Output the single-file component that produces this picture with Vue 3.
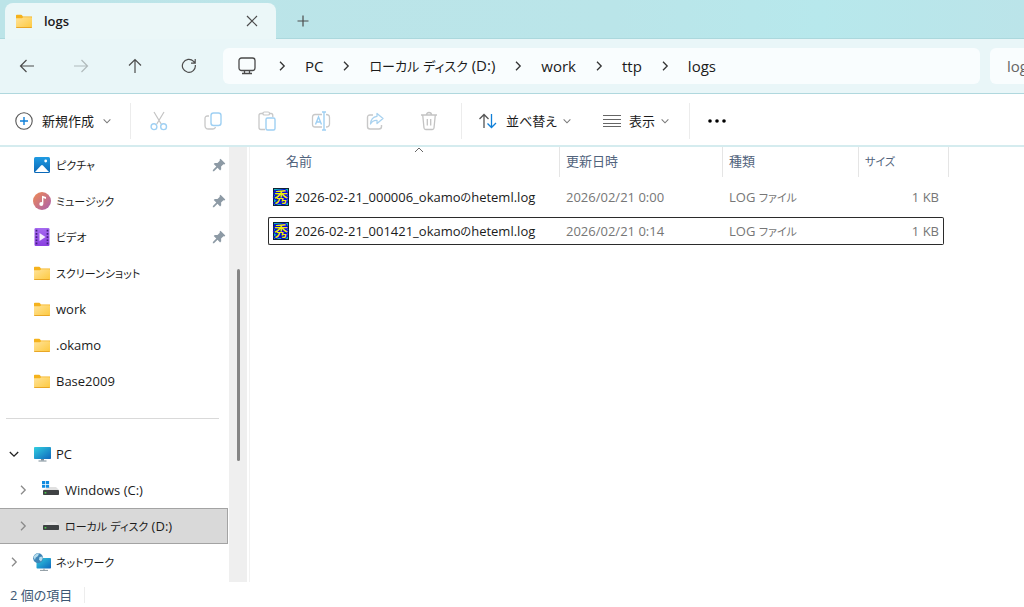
<script setup>
import { h } from 'vue'

const crumbs = ['PC', 'ローカル ディスク (D:)', 'work', 'ttp', 'logs']

const pinned = [
  { name: 'ピクチャ', icon: 'pictures', pin: true },
  { name: 'ミュージック', icon: 'music', pin: true },
  { name: 'ビデオ', icon: 'video', pin: true },
  { name: 'スクリーンショット', icon: 'folder' },
  { name: 'work', icon: 'folder' },
  { name: '.okamo', icon: 'folder' },
  { name: 'Base2009', icon: 'folder' },
]

const tree = [
  { name: 'PC', icon: 'pc', open: true },
  { name: 'Windows (C:)', icon: 'windrive', nested: true },
  { name: 'ローカル ディスク (D:)', icon: 'drive', nested: true, selected: true },
  { name: 'ネットワーク', icon: 'network' },
]

const files = [
  { name: '2026-02-21_000006_okamoのheteml.log', date: '2026/02/21 0:00', type: 'LOG ファイル', size: '1 KB' },
  { name: '2026-02-21_001421_okamoのheteml.log', date: '2026/02/21 0:14', type: 'LOG ファイル', size: '1 KB', focused: true },
]

// Sets kana runs in a smaller size than the Latin text around them.
const Label = (props) =>
  h('span', { class: 'label' }, props.text.split(/([\u3040-\u30ff]+)/).filter(Boolean).map((part) =>
    /[\u3040-\u30ff]/.test(part) ? h('span', { class: 'kana' }, part) : part))
Label.props = ['text']
</script>

<template>
  <div class="window">
    <svg class="defs" width="0" height="0" aria-hidden="true">
      <defs>
        <linearGradient id="gFolder" x1="0" y1="0" x2="1" y2="1"><stop offset="0" stop-color="#ffe39a" /><stop offset="1" stop-color="#fdc93f" /></linearGradient>
        <linearGradient id="gPic" x1="0" y1="0" x2="0" y2="1"><stop offset="0" stop-color="#1f9be2" /><stop offset="1" stop-color="#0a67b6" /></linearGradient>
        <linearGradient id="gMusic" x1="0" y1="0" x2="1" y2="1"><stop offset="0" stop-color="#f08b52" /><stop offset="1" stop-color="#a95fb0" /></linearGradient>
        <linearGradient id="gVideo" x1="0" y1="0" x2="0" y2="1"><stop offset="0" stop-color="#a56af0" /><stop offset="1" stop-color="#8a3fe0" /></linearGradient>
        <linearGradient id="gPc" x1="0" y1="0" x2="1" y2="1"><stop offset="0" stop-color="#32cfe0" /><stop offset="1" stop-color="#0f67bd" /></linearGradient>
      </defs>
      <symbol id="folder" viewBox="0 0 18 18">
        <path d="M1 3.6q0-.8.8-.8h4.4q.5 0 .8.4l.9 1.2h9.1V9H1z" fill="#f5b21c" />
        <path d="M1 6.2h5.6q.4 0 .7-.3l.9-.7h8q.8 0 .8.8v9q0 .8-.8.8H1.8q-.8 0-.8-.8z" fill="url(#gFolder)" />
        <path d="M1.2 15.5h15.6" stroke="#e6a01c" stroke-width=".9" />
      </symbol>
      <symbol id="pictures" viewBox="0 0 18 18">
        <rect x="1" y="1" width="16" height="16" rx="1.5" fill="url(#gPic)" />
        <path d="M2 16l6-6.4q1-1 2 0l6 6.4z" fill="#fff" /><circle cx="12.7" cy="5" r="1.4" fill="#fff" />
      </symbol>
      <symbol id="music" viewBox="0 0 18 18">
        <circle cx="9" cy="9" r="9" fill="url(#gMusic)" />
        <path d="M9 3.7l4 1.3v2l-2.8-.9v5.4" fill="#fff" /><path d="M9.6 4v8" stroke="#fff" stroke-width="1.2" /><circle cx="8.3" cy="12" r="2" fill="#fff" />
      </symbol>
      <symbol id="video" viewBox="0 0 18 18">
        <rect x="1.5" width="15" height="18" rx="1.2" fill="url(#gVideo)" />
        <path d="M3.5 1.8v15M14.5 1.8v15" stroke="#41217c" stroke-width="1.7" stroke-dasharray="1.7 1.5" />
        <path d="M6.5 5l6 4-6 4z" fill="#f4eefc" />
      </symbol>
      <symbol id="pc" viewBox="0 0 18 18">
        <rect x="1" y="2" width="17" height="12" rx=".8" fill="url(#gPc)" /><path d="M8 14h3v1.5H8z" fill="#7b8b96" /><path d="M5.5 16h8" stroke="#7b8b96" stroke-width="1" />
      </symbol>
      <symbol id="drive" viewBox="0 0 18 18">
        <path d="M4 5h10l3 4H1z" fill="#e4e4e4" /><rect x="1" y="8" width="16" height="5" rx=".8" fill="#3f4244" /><rect x="2.6" y="10" width="1.7" height="1.5" fill="#49d14c" />
      </symbol>
      <symbol id="windrive" viewBox="0 0 18 18">
        <path d="M7 6h7l3 3H1z" fill="#e0e0e0" /><rect x="1" y="9" width="16" height="5" rx=".8" fill="#3f4244" /><rect x="2.6" y="11" width="1.7" height="1.5" fill="#49d14c" />
        <path d="M0 0h3.2v3H0zM3.9 0h3.2v3H3.9zM0 3.8h3.2v3H0zM3.9 3.8h3.2v3H3.9z" fill="#108be0" />
      </symbol>
      <symbol id="network" viewBox="0 0 18 18">
        <rect x="3.5" y="5" width="14.5" height="10.5" rx=".8" fill="url(#gPc)" /><path d="M7 17.4h8M11 15.5v2" stroke="#8b979f" />
        <circle cx="5.2" cy="5.2" r="5" fill="#3f86b8" /><path d="M1 3q2-3 5-2.4L5 3 2.6 4.7 2 7Q.3 5.500 1 3zM6.500 4l3.200-.6q.6 3-1.700 5l-2-1.600z" fill="#b4dcec" />
      </symbol>
      <symbol id="pin" viewBox="0 0 14 14">
        <path d="M8.500.8l4.800 4.800-.9.900-1-.2-2.300 2.300.1 2.700-1.100 1.100-2.600-2.600L2 13.200l-1.200.1.100-1.200L4.300 8.600 1.700 6l1.100-1.100 2.700.1 2.300-2.300-.2-1z" fill="#8d9aa5" />
      </symbol>
      <symbol id="right" viewBox="0 0 10 10"><path d="M3 .8L7.200 5 3 9.200" fill="none" stroke="currentColor" stroke-width="1.300" /></symbol>
      <symbol id="down" viewBox="0 0 10 10"><path d="M.8 3L5 7.200 9.200 3" fill="none" stroke="currentColor" stroke-width="1.300" /></symbol>
    </svg>

    <header class="tabbar">
      <div class="tab">
        <svg class="i18"><use href="#folder" /></svg>
        <span class="tab-title">logs</span>
        <button class="icon-btn" aria-label="閉じる"><svg width="12" height="12" viewBox="0 0 12 12" class="line"><path d="M1 1l10 10M11 1L1 11" /></svg></button>
      </div>
      <button class="icon-btn new-tab" aria-label="新しいタブ"><svg width="12" height="12" viewBox="0 0 12 12" class="line"><path d="M6 .5v11M.5 6h11" /></svg></button>
    </header>

    <nav class="navbar">
      <div class="nav-buttons">
        <button class="icon-btn" aria-label="戻る"><svg width="16" height="16" viewBox="0 0 16 16" class="line"><path d="M15 8H1.500M7.500 2L1.500 8l6 6" /></svg></button>
        <button class="icon-btn" aria-label="進む" disabled><svg width="16" height="16" viewBox="0 0 16 16" class="line faded"><path d="M1 8h13.500M8.500 2l6 6-6 6" /></svg></button>
        <button class="icon-btn" aria-label="上へ"><svg width="16" height="16" viewBox="0 0 16 16" class="line"><path d="M8 15V1.500M2 7.500l6-6 6 6" /></svg></button>
        <button class="icon-btn" aria-label="更新"><svg width="16" height="16" viewBox="0 0 16 16" class="line"><path d="M14.300 7a6.500 6.500 0 1 1-1.700-3.600L14 5M14.200 1v4.200H10" /></svg></button>
      </div>
      <div class="address">
        <svg class="monitor" width="18" height="18" viewBox="0 0 18 18" fill="none" stroke="#4a4a4a" stroke-width="1.300"><rect x="1" y="1" width="16" height="12.500" rx="2.500" /><path d="M4 16.500h10M6.500 14v2M11.500 14v2" /></svg>
        <template v-for="c in crumbs" :key="c">
          <svg class="chev"><use href="#right" /></svg>
          <a href="#" class="crumb"><Label :text="c" /></a>
        </template>
      </div>
      <input class="search" type="text" aria-label="検索" placeholder="logs" />
    </nav>

    <div class="toolbar">
      <button class="tool create">
        <svg width="18" height="18" viewBox="0 0 18 18" fill="none"><circle cx="9" cy="9" r="8.200" stroke="#555" stroke-width="1.100" /><path d="M9 5v8M5 9h8" stroke="#0f7fd8" stroke-width="1.400" /></svg>
        <span>新規作成</span><svg class="caret"><use href="#down" /></svg>
      </button>
      <div class="group">
        <button class="icon-btn" aria-label="切り取り" disabled><svg width="18" height="20" viewBox="0 0 18 20" fill="none"><path d="M4 1l7.500 12.500M14 1L6.500 13.500" stroke="#c3c3c3" stroke-width="1.200" /><g stroke="#9fd0f3" stroke-width="1.400"><circle cx="4" cy="15.700" r="2.900" /><circle cx="13.600" cy="15.700" r="2.900" /></g></svg></button>
        <button class="icon-btn" aria-label="コピー" disabled><svg width="18" height="20" viewBox="0 0 18 20" fill="none"><path d="M5 5H3.500Q1 5 1 7.500v7Q1 18 4.500 18H9q2 0 2.500-2" stroke="#c8c8c8" stroke-width="1.300" /><rect x="7" y="2" width="10" height="12.500" rx="2.500" stroke="#9fd0f3" stroke-width="1.400" /></svg></button>
        <button class="icon-btn" aria-label="貼り付け" disabled><svg width="18" height="20" viewBox="0 0 18 20" fill="none"><path d="M5 2.500H3Q1 2.500 1 4.500v12Q1 18.500 3 18.500h4M11 2.500h2q1.800 0 1.800 2V6" stroke="#c8c8c8" stroke-width="1.300" /><rect x="5" y="1" width="6.500" height="3" rx="1.300" stroke="#c8c8c8" stroke-width="1.200" /><rect x="8" y="7" width="9" height="12" rx="1.500" stroke="#9fd0f3" stroke-width="1.400" /></svg></button>
        <button class="icon-btn" aria-label="名前の変更" disabled><svg width="20" height="20" viewBox="0 0 20 20" fill="none"><path d="M11 3.500H4Q1.500 3.500 1.500 6v7.500q0 2.500 2.500 2.500h7M15 3.500q3.500 0 3.500 3v6.500q0 3-3.500 3" stroke="#c8c8c8" stroke-width="1.300" /><path d="M4.500 13.500L7.500 6l3 7.500M5.700 11h3.800M13 1v18M11 1h4M11 19h4" stroke="#9fd0f3" stroke-width="1.400" /></svg></button>
        <button class="icon-btn" aria-label="共有" disabled><svg width="18" height="20" viewBox="0 0 18 20" fill="none"><path d="M7 4H4Q1.500 4 1.500 6.500v9Q1.500 18 4 18h9q2.500 0 2.500-2.500V14" stroke="#c8c8c8" stroke-width="1.400" /><path d="M11 2.500l6 5-6 5V9.500q-4-.5-6.500 3.500.5-7 6.500-7.700z" stroke="#a9d2ef" stroke-width="1.300" stroke-linejoin="round" /></svg></button>
        <button class="icon-btn" aria-label="削除" disabled><svg width="18" height="20" viewBox="0 0 18 20" fill="none" stroke="#c3c3c3" stroke-width="1.300"><path d="M1 4h16M6.500 4Q6.500 1.500 9 1.500T11.500 4M2.700 4l1.300 13q.2 1.500 1.700 1.500h6.600q1.500 0 1.700-1.500l1.300-13M7.300 8v6.500M10.700 8v6.500" /></svg></button>
      </div>
      <div class="views">
        <button class="tool">
          <svg width="20" height="16" viewBox="0 0 20 16" fill="none" stroke-width="1.300"><path d="M6 15V1.500M1.500 6L6 1.500 10.500 6" stroke="#555" /><path d="M13.500 1v13.500M9.500 10.500l4 4 4.500-4.500" stroke="#0f7fd8" /></svg>
          <span>並べ替え</span><svg class="caret"><use href="#down" /></svg>
        </button>
        <button class="tool">
          <svg width="18" height="14" viewBox="0 0 18 14" stroke="#666"><path d="M0 1.500h18M0 5.500h18M0 9.500h18M0 12.500h18" /></svg>
          <span>表示</span><svg class="caret"><use href="#down" /></svg>
        </button>
      </div>
      <button class="icon-btn more" aria-label="その他"><svg width="20" height="6" viewBox="0 0 20 6"><circle cx="3" cy="3" r="1.800" /><circle cx="10" cy="3" r="1.800" /><circle cx="17" cy="3" r="1.800" /></svg></button>
    </div>

    <div class="body">
      <aside class="side">
        <ul>
          <li v-for="p in pinned" :key="p.name">
            <a href="#" class="node"><svg class="i18"><use :href="'#' + p.icon" /></svg><Label :text="p.name" />
              <svg v-if="p.pin" class="pin"><use href="#pin" /></svg></a>
          </li>
        </ul>
        <hr />
        <ul>
          <li v-for="t in tree" :key="t.name">
            <a href="#" class="node branch" :class="{ nested: t.nested, selected: t.selected, open: t.open }">
              <svg class="twist"><use :href="t.open ? '#down' : '#right'" /></svg>
              <svg class="i18"><use :href="'#' + t.icon" /></svg><Label :text="t.name" /></a>
          </li>
        </ul>
      </aside>
      <div class="scroll"><div class="thumb"></div></div>
      <main class="list">
        <table>
          <colgroup><col class="c-name" /><col class="c-date" /><col class="c-type" /><col class="c-size" /></colgroup>
          <thead>
            <tr>
              <th class="name">名前<svg class="sort" viewBox="0 0 10 6"><path d="M1 5l4-4 4 4" fill="none" stroke="#666" /></svg></th>
              <th>更新日時</th><th>種類</th><th class="last"><Label text="サイズ" /></th>
            </tr>
          </thead>
          <tbody>
            <tr v-for="f in files" :key="f.name" :class="{ focused: f.focused }">
              <td><div class="file">
                <svg class="hide" width="16" height="18" viewBox="0 0 16 18">
                  <rect x=".5" y=".5" width="15" height="17" fill="#0fb5b9" stroke="#123" />
                  <path d="M1 4h13M7 2v14M2 8l12 1M3 14l10-2M11 10l3 5" stroke="#0909e0" stroke-width="3" />
                  <text x="8" y="14" text-anchor="middle" class="glyph">秀</text>
                </svg>
                <Label :text="f.name" /></div></td>
              <td>{{ f.date }}</td><td><Label :text="f.type" /></td><td class="size">{{ f.size }}</td>
            </tr>
          </tbody>
        </table>
      </main>
    </div>

    <footer class="status"><span>2 個の項目</span></footer>
  </div>
</template>

<style>
body { margin: 0; background: #fff; }
</style>

<style scoped>
* { box-sizing: border-box; }
.window { min-height: 100vh; display: flex; flex-direction: column; overflow: hidden; background: #fff; color: #1b1b1b; font: 13px/20px "Open Sans", "Noto Sans CJK JP", sans-serif; font-feature-settings: "palt"; }
.defs { position: absolute; }
button { font: inherit; color: inherit; border: 0; background: none; padding: 0; }
a { color: inherit; text-decoration: none; }
ul { list-style: none; margin: 0; padding: 0; }
.i18 { width: 18px; height: 18px; flex: none; }
.line { fill: none; stroke: #4c4c4c; stroke-width: 1.2; }
.faded { stroke: #b0babb; }
.icon-btn { display: flex; align-items: center; justify-content: center; flex: none; }
.window :deep(.kana) { font-size: 11px; }
.address :deep(.kana) { font-size: 13px; }

.tabbar { height: 39px; flex: none; display: flex; align-items: flex-end; padding-left: 5px; border-bottom: 1px solid #acd8dd; background: linear-gradient(90deg, #bce4e8 0%, #bae5e9 60%, #b7e8ec 80%, #bbe4e9 100%); }
.tab { width: 271px; height: 36px; margin-bottom: -1px; display: flex; align-items: center; padding: 0 18px 0 10px; border-radius: 8px 8px 0 0; background: #ebf7f8; }
.tab-title { flex: 1; margin-left: 11px; font-weight: 600; }
.new-tab { width: 54px; height: 34px; }

.navbar { height: 55px; flex: none; display: flex; align-items: center; padding-bottom: 1px; background: #e9f6f8; border-bottom: 1px solid #b0d8de; }
.nav-buttons { display: flex; width: 223px; flex: none; }
.nav-buttons .icon-btn { width: 54px; height: 36px; }
.address { flex: 1; min-width: 0; height: 36px; display: flex; align-items: center; padding-left: 15px; border-radius: 6px; background: #f9fdfe; font-size: 15px; white-space: nowrap; }
.monitor { margin-right: 5px; }
.chev { width: 10px; height: 10px; margin: 0 18px 0 16px; color: #333; flex: none; }
.crumb + .chev { margin-left: 18px; }
.search { width: 44px; height: 36px; flex: none; margin: 0 -10px 0 10px; padding: 0 0 0 17px; border: 0; border-radius: 6px; background: #f9fdfe; font: inherit; font-size: 15px; }
.search::placeholder { color: #666; opacity: 1; }

.toolbar { height: 53px; flex: none; display: flex; align-items: center; padding-top: 2px; border-bottom: 2px solid #d5ecef; }
.tool { display: flex; align-items: center; height: 36px; white-space: nowrap; }
.create { width: 130px; padding-left: 15px; gap: 9px; }
.caret { width: 8px; height: 8px; color: #777; }
.views .caret { margin-left: -2px; }
.group { height: 36px; display: flex; align-items: center; border: solid #ececec; border-width: 0 1px; padding-right: 5px; }
.group .icon-btn { width: 54px; height: 36px; }
.group .icon-btn:first-child { width: 55px; }
.views { height: 36px; display: flex; gap: 32px; padding: 0 20px 0 16px; border-right: 1px solid #ececec; }
.views .tool { gap: 8px; }
.more { margin-left: 17px; height: 36px; }

.body { flex: 1; display: flex; min-height: 0; }
.side { width: 229px; flex: none; padding-right: 1px; }
.node { height: 36px; display: flex; align-items: center; padding: 0 2px 0 33px; white-space: nowrap; }
.node .label { flex: 1; margin-left: 5px; }
.pin { width: 14px; height: 14px; }
hr { height: 1px; border: 0; margin: 19px 9px 17px 6px; background: #d9d9d9; }
.branch { padding-left: 9px; }
.branch.nested { padding-left: 18px; }
.twist { width: 10px; height: 10px; margin-right: 14px; color: #8a8a8a; flex: none; }
.open .twist { color: #222; }
.selected { background: #d9d9d9; border: 1px solid #a3a3a3; border-left: 0; }
.scroll { width: 18px; flex: none; background: #efefef; padding: 122px 0 0 8px; }
.thumb { width: 3px; height: 192px; border-radius: 2px; background: #858585; }
.list { flex: 1; min-width: 0; margin-left: 2px; border-left: 1px solid #f2f2f2; padding-left: 18px; }

table { table-layout: fixed; width: 676px; margin-top: -6px; border-collapse: separate; border-spacing: 0 6px; }
.c-name { width: 292px; } .c-date { width: 163px; } .c-type { width: 136px; } .c-size { width: 85px; }
th { position: relative; height: 30px; padding: 0 0 2px 6px; text-align: left; font-weight: 400; color: #52647d; border-right: 1px solid #e5e5e5; }
th.name { padding-left: 18px; }
th.last { border-right: 0; }
th.last::after { content: ""; position: absolute; top: 0; bottom: 0; right: -5px; width: 1px; background: #e5e5e5; }
.sort { position: absolute; left: 146px; top: 0; width: 10px; height: 6px; }
td { height: 28px; padding: 0 0 0 6px; border: solid transparent; border-width: 1px 0; color: #767676; white-space: nowrap; }
td:first-child { padding-left: 4px; border-left-width: 1px; color: #1b1b1b; }
td.size { text-align: right; padding-right: 4px; border-right-width: 1px; }
.focused td { border-color: #2b2b2b; }
.focused td:first-child { border-radius: 2px 0 0 2px; }
.focused td:last-child { border-radius: 0 2px 2px 0; }
.file { display: flex; align-items: center; gap: 6px; }
.hide { overflow: visible; }
.glyph { font: 500 14px "Noto Sans CJK JP", sans-serif; fill: #f2f000; stroke: #0909d8; stroke-width: 2px; paint-order: stroke; }

.status { height: 25px; flex: none; display: flex; align-items: center; padding-left: 10px; color: #3d5874; }
.status span { padding-right: 12px; border-right: 1px solid #ededed; line-height: 16px; }
</style>
